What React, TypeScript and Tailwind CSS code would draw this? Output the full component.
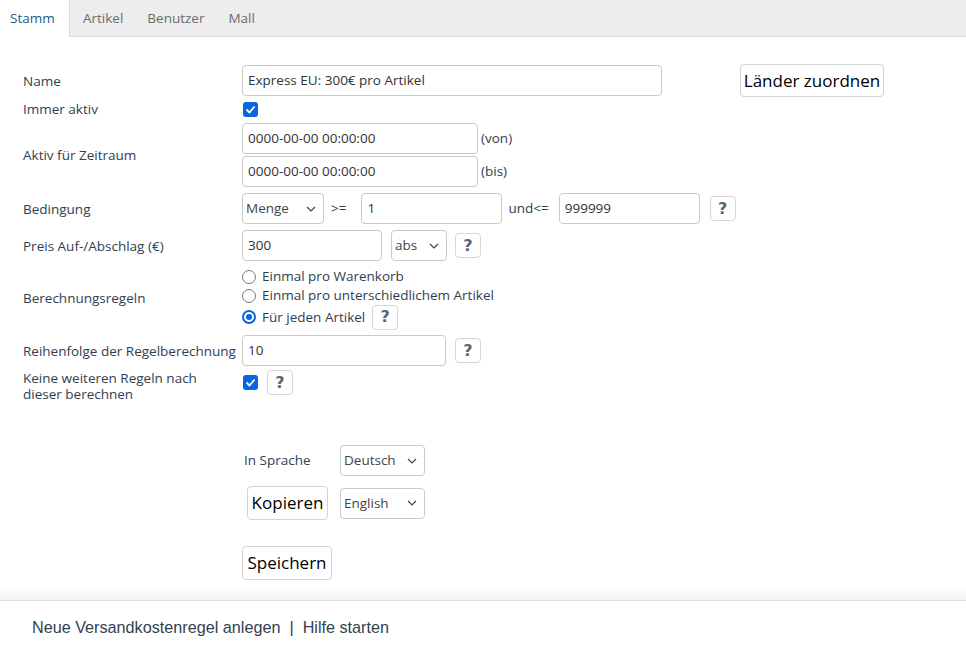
import React from 'react'

const FONT = "font-['Open_Sans',sans-serif]"

function Chevron() {
  return (
    <svg width="10" height="6" viewBox="0 0 10 6" className="shrink-0">
      <path d="M1 1l4 4 4-4" fill="none" stroke="#444" strokeWidth="1.2" />
    </svg>
  )
}

function TextInput({ value, w }: { value: string; w: string }) {
  return (
    <div
      className={`${w} h-[31px] flex items-center rounded-[4px] border border-[#c9c9c9] bg-white px-[5px] text-[13.5px] text-[#333]`}
    >
      {value}
    </div>
  )
}

function Select({ value, w, h = 'h-[31px]' }: { value: string; w: string; h?: string }) {
  return (
    <div
      className={`${w} ${h} flex items-center justify-between rounded-[4px] border border-[#c9c9c9] bg-white pl-[3px] pr-[7px] text-[13.5px] text-[#444]`}
    >
      <span>{value}</span>
      <Chevron />
    </div>
  )
}

function Help() {
  return (
    <div className="w-[26px] h-[25px] flex items-center justify-center rounded-[4px] border border-[#d6d6d6] bg-white text-[16px] font-bold leading-none text-[#56657a] font-['DejaVu_Sans',sans-serif]">
      ?
    </div>
  )
}

function Checkbox() {
  return (
    <span className="w-[15px] h-[15px] flex items-center justify-center rounded-[3px] bg-[#0a65e0]">
      <svg width="11" height="9" viewBox="0 0 11 9">
        <path d="M1.5 4.5l3 3 5-6" fill="none" stroke="white" strokeWidth="1.8" />
      </svg>
    </span>
  )
}

function Radio({ checked }: { checked?: boolean }) {
  return checked ? (
    <span className="w-[14px] h-[14px] rounded-full border-[2px] border-[#0a65e0] flex items-center justify-center">
      <span className="w-[6px] h-[6px] rounded-full bg-[#0a65e0]" />
    </span>
  ) : (
    <span className="w-[14px] h-[14px] rounded-full border border-[#777]" />
  )
}

function Button({ children, cls }: { children: React.ReactNode; cls: string }) {
  return (
    <div
      className={`${cls} flex items-center justify-center rounded-[4px] border border-[#d3d3d3] bg-white text-[17px] text-black`}
    >
      {children}
    </div>
  )
}

function Row({ label, children, cls = '' }: { label: React.ReactNode; children: React.ReactNode; cls?: string }) {
  return (
    <div className={`flex items-center ${cls}`}>
      <div className="w-[219px] shrink-0 text-[13.5px] leading-[16px] text-[#2f3e50]">{label}</div>
      <div className="flex items-center">{children}</div>
    </div>
  )
}

export default function App() {
  return (
    <div className={`w-[966px] h-[645px] bg-white overflow-hidden flex flex-col ${FONT}`}>
      {/* Tabs */}
      <div className="h-[37px] shrink-0 flex bg-[#ededed] border-b border-[#dadada] text-[13.5px]">
        <div className="w-[70px] -mb-px bg-white border-r border-[#dadada] flex items-center pl-[10px] text-[#1b5c8c]">
          Stamm
        </div>
        <div className="flex items-center pl-[13px] gap-[24px] text-[#6b6b6b]">
          <span>Artikel</span>
          <span>Benutzer</span>
          <span>Mall</span>
        </div>
      </div>

      {/* Form */}
      <div className="flex-1 min-h-0 pl-[23px] pt-[28px]">
        <Row label="Name" cls="h-[31px]">
          <TextInput value="Express EU: 300€ pro Artikel" w="w-[420px]" />
          <Button cls="ml-[78px] w-[144px] h-[33px]">Länder zuordnen</Button>
        </Row>
        <Row label="Immer aktiv" cls="h-[26px]">
          <span className="ml-[1px]">
            <Checkbox />
          </span>
        </Row>
        <Row label="Aktiv für Zeitraum" cls="mt-[1px]">
          <div className="flex flex-col gap-[2px]">
            <div className="flex items-center gap-[3px]">
              <TextInput value="0000-00-00 00:00:00" w="w-[236px]" />
              <span className="text-[13.5px] text-[#2f3e50]">(von)</span>
            </div>
            <div className="flex items-center gap-[3px]">
              <TextInput value="0000-00-00 00:00:00" w="w-[236px]" />
              <span className="text-[13.5px] text-[#2f3e50]">(bis)</span>
            </div>
          </div>
        </Row>
        <Row label="Bedingung" cls="mt-[6px]">
          <Select value="Menge" w="w-[82px]" />
          <span className="ml-[7px] mr-[15px] text-[13.5px] text-[#2f3e50]">&gt;=</span>
          <TextInput value="1" w="w-[141px]" />
          <span className="ml-[6px] mr-[10px] text-[13.5px] text-[#2f3e50]">und&lt;=</span>
          <TextInput value="999999" w="w-[141px]" />
          <span className="ml-[10px]">
            <Help />
          </span>
        </Row>
        <Row label="Preis Auf-/Abschlag (€)" cls="mt-[6px]">
          <TextInput value="300" w="w-[140px]" />
          <span className="ml-[9px]">
            <Select value="abs" w="w-[56px]" />
          </span>
          <span className="ml-[8px]">
            <Help />
          </span>
        </Row>
        <Row label="Berechnungsregeln" cls="mt-[6px]">
          <div className="flex flex-col text-[13.5px] text-[#2f3e50]">
            <div className="h-[19px] flex items-center gap-[6px]">
              <Radio />
              <span>Einmal pro Warenkorb</span>
            </div>
            <div className="h-[19px] flex items-center gap-[6px]">
              <Radio />
              <span>Einmal pro unterschiedlichem Artikel</span>
            </div>
            <div className="h-[24px] flex items-center gap-[6px]">
              <Radio checked />
              <span>Für jeden Artikel</span>
              <span className="ml-[1px]">
                <Help />
              </span>
            </div>
          </div>
        </Row>
        <Row label={<span className="whitespace-nowrap">Reihenfolge der Regelberechnung</span>} cls="mt-[6px]">
          <TextInput value="10" w="w-[204px]" />
          <span className="ml-[9px]">
            <Help />
          </span>
        </Row>
        <Row
          label={
            <div className="flex flex-col">
              <span className="h-[16px]">Keine weiteren Regeln nach</span>
              <span className="h-[16px]">dieser berechnen</span>
            </div>
          }
          cls="mt-[4px] items-start"
        >
          <div className="flex items-center gap-[9px]">
            <span className="ml-[1px]">
              <Checkbox />
            </span>
            <Help />
          </div>
        </Row>

        {/* Language section */}
        <div className="ml-[219px] mt-[43px] flex flex-col">
          <div className="flex items-center">
            <span className="ml-[2px] w-[96px] text-[13.5px] text-[#2f3e50]">In Sprache</span>
            <Select value="Deutsch" w="w-[85px]" />
          </div>
          <div className="flex items-center mt-[10px]">
            <Button cls="ml-[5px] w-[81px] h-[34px]">Kopieren</Button>
            <span className="ml-[12px]">
              <Select value="English" w="w-[85px]" />
            </span>
          </div>
          <Button cls="mt-[26px] w-[90px] h-[34px]">Speichern</Button>
        </div>
      </div>

      {/* Footer */}
      <div className="h-[14px] shrink-0 bg-gradient-to-b from-white to-[#f3f3f3] border-b border-[#dcdcdc]" />
      <div className="h-[44px] shrink-0 flex items-start pt-[16px] pl-[32px] text-[16.2px] leading-[20px] text-[#34414f] font-['Liberation_Sans',sans-serif]">
        <span>Neue Versandkostenregel anlegen</span>
        <span className="mx-[9px]">|</span>
        <span>Hilfe starten</span>
      </div>
    </div>
  )
}
